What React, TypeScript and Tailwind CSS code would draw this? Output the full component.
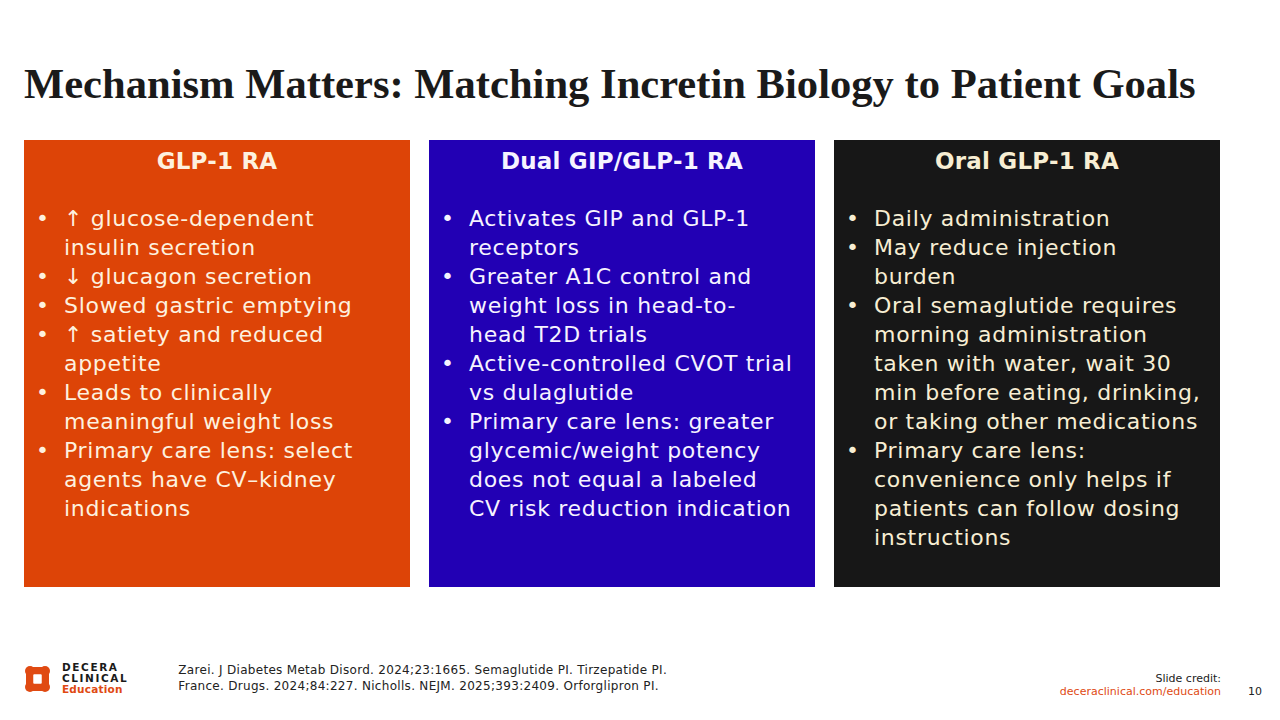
const panels = [
  {
    title: "GLP-1 RA",
    box: "bg-[#dd4407] text-[#fdf1df]",
    items: [
      ["↑ glucose-dependent", "insulin secretion"],
      ["↓ glucagon secretion"],
      ["Slowed gastric emptying"],
      ["↑ satiety and reduced", "appetite"],
      ["Leads to clinically", "meaningful weight loss"],
      ["Primary care lens: select", "agents have CV–kidney", "indications"],
    ],
  },
  {
    title: "Dual GIP/GLP-1 RA",
    box: "bg-[#2200b4] text-[#f6f3ff]",
    items: [
      ["Activates GIP and GLP-1", "receptors"],
      ["Greater A1C control and", "weight loss in head-to-", "head T2D trials"],
      ["Active-controlled CVOT trial", "vs dulaglutide"],
      [
        "Primary care lens: greater",
        "glycemic/weight potency",
        "does not equal a labeled",
        "CV risk reduction indication",
      ],
    ],
  },
  {
    title: "Oral GLP-1 RA",
    box: "bg-[#171717] text-[#f7eed3]",
    items: [
      ["Daily administration"],
      ["May reduce injection", "burden"],
      [
        "Oral semaglutide requires",
        "morning administration",
        "taken with water, wait 30",
        "min before eating, drinking,",
        "or taking other medications",
      ],
      ["Primary care lens:", "convenience only helps if", "patients can follow dosing", "instructions"],
    ],
  },
];

function Logo() {
  return (
    <svg width="25" height="26" viewBox="0 0 25 26">
      <g fill="#e04a12">
        <circle cx="5" cy="5" r="5" />
        <circle cx="20" cy="5" r="5" />
        <circle cx="5" cy="21" r="5" />
        <circle cx="20" cy="21" r="5" />
        <rect x="5" y="1" width="15" height="7.5" />
        <rect x="5" y="17.5" width="15" height="7.5" />
        <rect x="1" y="5" width="7.5" height="16" />
        <rect x="16.5" y="5" width="7.5" height="16" />
      </g>
      <rect x="8.5" y="8.5" width="8" height="9" fill="#ffffff" />
    </svg>
  );
}

export default function App() {
  return (
    <div
      className="flex h-[720px] w-[1280px] flex-col bg-white"
      style={{ fontFamily: "'DejaVu Sans', 'Open Sans', sans-serif" }}
    >
      {/* Title */}
      <h1
        className="mt-[60px] pl-[24px] text-[42.6px] font-bold leading-[48px] text-[#1a1a1a]"
        style={{ fontFamily: "'Liberation Serif', 'Times New Roman', serif" }}
      >
        Mechanism Matters: Matching Incretin Biology to Patient Goals
      </h1>

      {/* Panels */}
      <div className="mt-[32px] flex gap-[19px] pl-[24px]">
        {panels.map((p) => (
          <div key={p.title} className={`h-[447px] w-[386px] pt-[6px] ${p.box}`}>
            <div className="text-center text-[23px] font-bold leading-[30px] tracking-[0.2px]">
              {p.title}
            </div>
            <ul className="mt-[28px] flex flex-col text-[22px] leading-[29px] tracking-[0.7px]">
              {p.items.map((lines, i) => (
                <li key={i} className="flex">
                  <span className="w-[40px] shrink-0 pl-[12px]">•</span>
                  <span className="whitespace-nowrap">
                    {lines.map((l, j) => (
                      <span key={j} className="block">
                        {l}
                      </span>
                    ))}
                  </span>
                </li>
              ))}
            </ul>
          </div>
        ))}
      </div>

      {/* Footer */}
      <div className="mt-auto mb-[22px] flex items-end">
        <div className="flex items-center gap-[12px] pl-[25px] pb-[3px]">
          <Logo />
          <div className="flex flex-col text-[10.5px] font-bold leading-[11px] tracking-[1.6px] text-[#1a1a1a]">
            <span>DECERA</span>
            <span>CLINICAL</span>
            <span className="tracking-[0.2px] text-[#e04a12]">Education</span>
          </div>
        </div>
        <div className="ml-[50px] pb-[4px] text-[12px] leading-[16px] tracking-[0.3px] text-[#222]">
          <div>Zarei. J Diabetes Metab Disord. 2024;23:1665. Semaglutide PI. Tirzepatide PI.</div>
          <div>France. Drugs. 2024;84:227. Nicholls. NEJM. 2025;393:2409. Orforglipron PI.</div>
        </div>
        <div className="ml-auto flex items-end">
          <div className="text-right text-[11px] leading-[13px]">
            <div className="text-[#222]">Slide credit:</div>
            <div className="text-[#e04a12]">deceraclinical.com/education</div>
          </div>
          <div className="w-[59px] pl-[27px] text-[11px] leading-[13px] text-[#222]">10</div>
        </div>
      </div>
    </div>
  );
}
